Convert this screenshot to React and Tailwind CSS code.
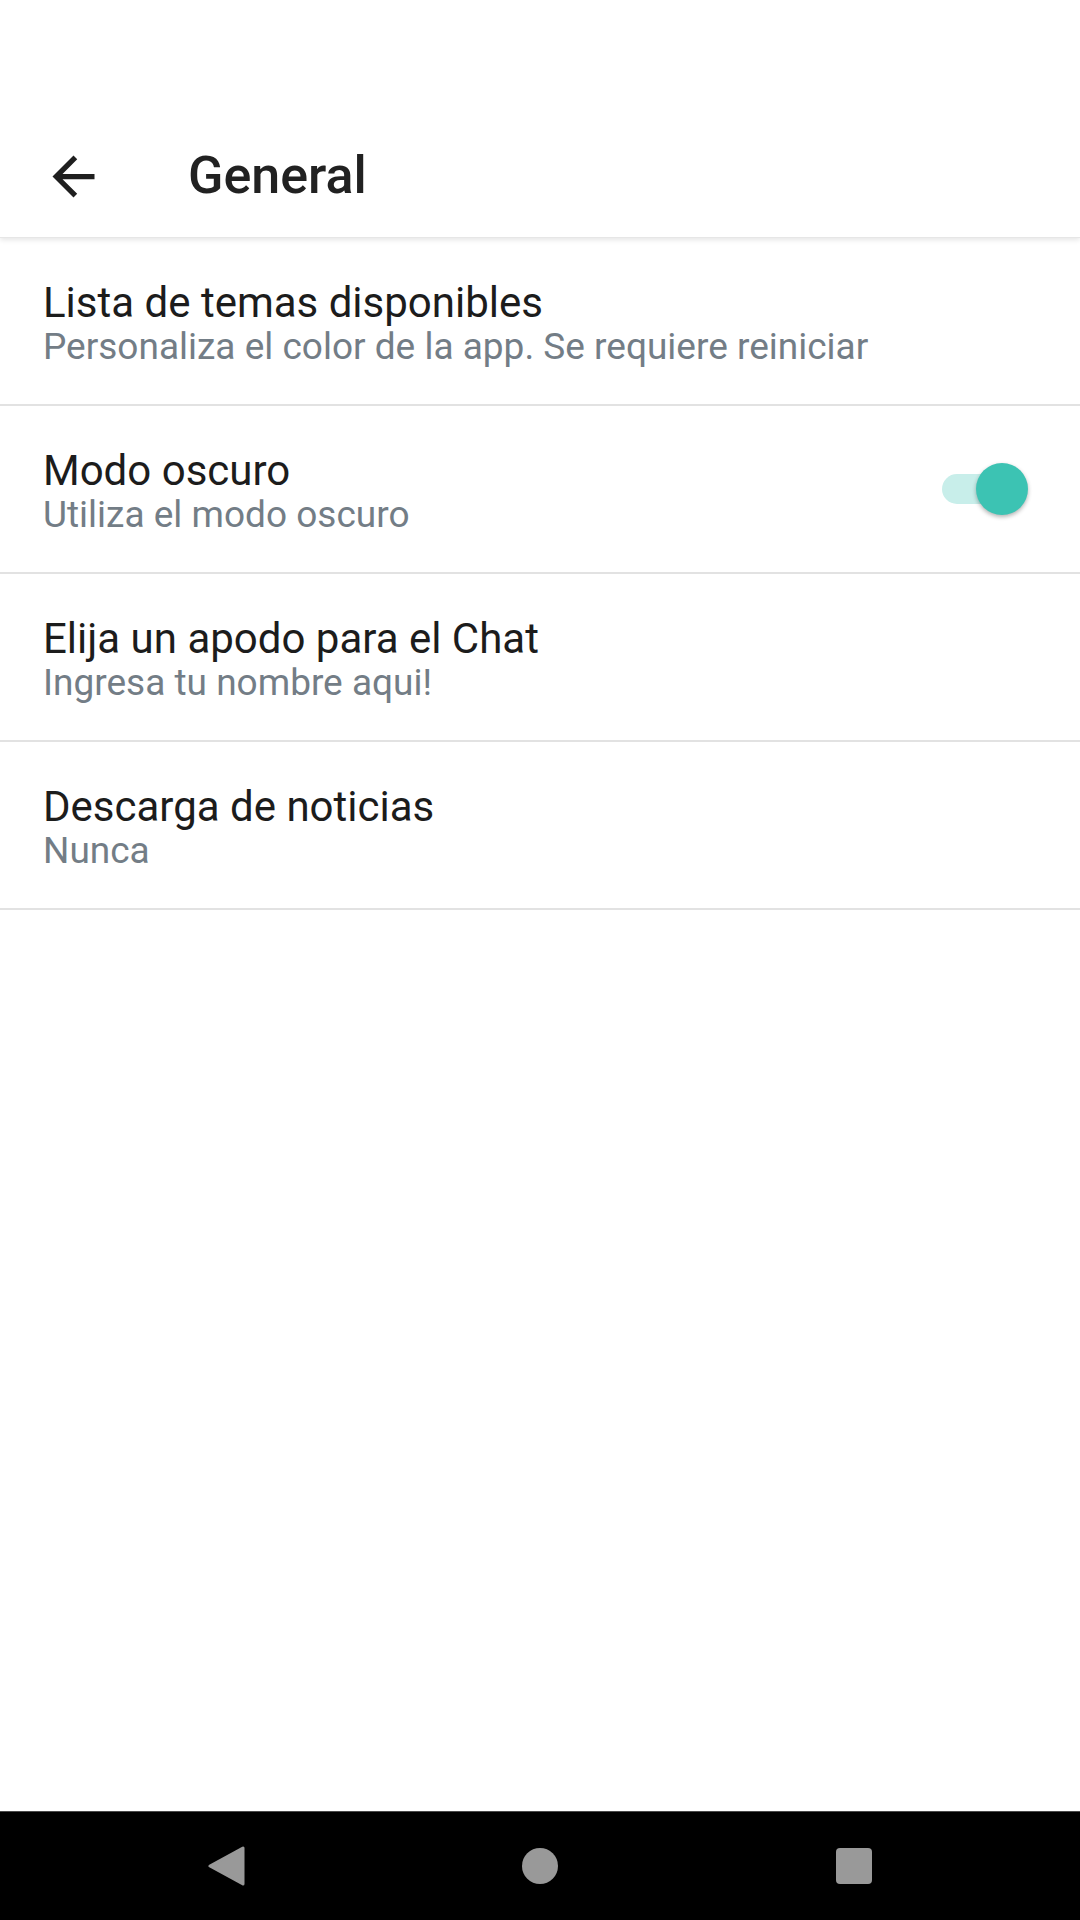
import React from "react";

const rows = [
  { title: "Lista de temas disponibles", sub: "Personaliza el color de la app. Se requiere reiniciar" },
  { title: "Modo oscuro", sub: "Utiliza el modo oscuro", toggle: true },
  { title: "Elija un apodo para el Chat", sub: "Ingresa tu nombre aqui!" },
  { title: "Descarga de noticias", sub: "Nunca" },
];

const Toggle = () => (
  <div className="relative w-[86px] h-[52px] mr-[9px] shrink-0">
    <div className="absolute left-0 top-[11px] w-[80px] h-[30px] rounded-full bg-[#c8eeea]" />
    <div className="absolute right-0 top-0 w-[52px] h-[52px] rounded-full bg-[#3cc3b3] shadow-[0_2px_4px_rgba(0,0,0,0.3)]" />
  </div>
);

const SettingRow = ({ title, sub, toggle }) => (
  <div className="h-[168px] border-b-2 border-[#e2e2e2] px-[43px] flex items-center">
    <div className="flex-1 flex flex-col pt-[5px]">
      <span className="text-[42px] leading-[50px] text-[#1c1c1c]">{title}</span>
      <span className="-mt-[3px] text-[37px] leading-[44px] text-[#737d86]">{sub}</span>
    </div>
    {toggle && <Toggle />}
  </div>
);

export default function App() {
  return (
    <div className="w-[1080px] h-[1920px] flex flex-col bg-white font-['Roboto',sans-serif]">
      {/* toolbar */}
      <div className="relative z-10 h-[238px] pt-[115px] flex items-center bg-white shadow-[0_2px_5px_rgba(0,0,0,0.10)] border-b border-[#e6e6e6]">
        <div className="w-[63px] h-[63px] ml-[42px]">
          <svg viewBox="0 0 24 24" width="63" height="63" fill="#1f1f1f">
            <path d="M20 11H7.83l5.59-5.59L12 4l-8 8 8 8 1.41-1.41L7.83 13H20v-2z" />
          </svg>
        </div>
        <h1 className="ml-[83px] text-[52px] font-medium text-[#212121] leading-none">General</h1>
      </div>

      <div className="flex flex-col">
        {rows.map((r) => (
          <SettingRow key={r.title} {...r} />
        ))}
      </div>

      <div className="flex-1" />

      {/* android nav bar */}
      <div className="h-[109px] bg-black border-t border-[#4a4a4a] flex items-center justify-center gap-[274px]">
        <svg width="40" height="40" viewBox="0 0 40 40">
          <path d="M37 2 L37 38 L4 20 Z" fill="#999" stroke="#999" strokeWidth="3" strokeLinejoin="round" />
        </svg>
        <svg width="40" height="40" viewBox="0 0 40 40">
          <circle cx="20" cy="20" r="18" fill="#999" />
        </svg>
        <svg width="40" height="40" viewBox="0 0 40 40">
          <rect x="2" y="2" width="36" height="36" rx="4" fill="#999" />
        </svg>
      </div>
    </div>
  );
}
